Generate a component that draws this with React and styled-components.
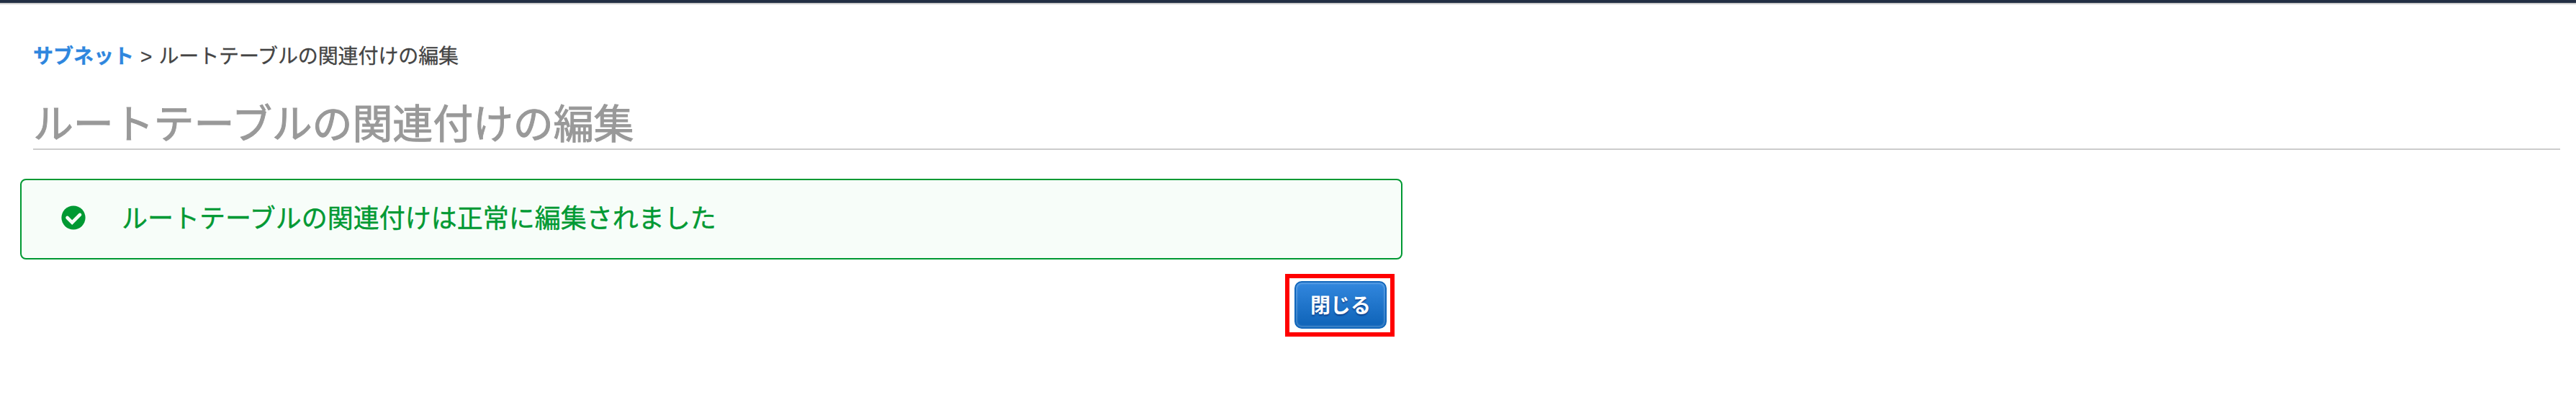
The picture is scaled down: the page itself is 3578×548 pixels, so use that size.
import React from "react";
import styled, { createGlobalStyle } from "styled-components";

const GlobalStyle = createGlobalStyle`
  body {
    margin: 0;
    background: #fff;
    font-family: "Liberation Sans", "Noto Sans CJK JP", sans-serif;
    font-size: 28px;
    color: #444;
  }
`;

const Page = styled.div`
  box-sizing: border-box;
  height: 548px;
  overflow: hidden;
`;

const TopBar = styled.header`
  height: 4px;
  background: #232f43;
  border-bottom: 2px solid #ccc;
`;

const Main = styled.main`
  display: flex;
  flex-direction: column;
  padding: 53px 22px 0 28px;
`;

const Breadcrumb = styled.nav`
  display: flex;
  gap: 9px;
  height: 40px;
  margin-left: 18px;
  line-height: 40px;
  white-space: pre;
  -webkit-text-stroke: 0.3px currentColor;
`;

const CrumbLink = styled.a`
  color: #2e86de;
  font-weight: 700;
  text-decoration: none;
`;

const CurrentCrumb = styled.span`
  letter-spacing: -0.12px;
`;

const Title = styled.h1`
  box-sizing: border-box;
  height: 109px;
  margin: 0 0 40px 18px;
  padding-top: 38px;
  border-bottom: 2px solid #ccc;
  color: #999;
  font-size: 56px;
  font-weight: 400;
  line-height: 72px;
  letter-spacing: -0.15px;
  -webkit-text-stroke: 1px currentColor;
`;

const Panel = styled.section`
  display: flex;
  flex-direction: column;
  width: 1920px;
`;

const Alert = styled.div`
  box-sizing: border-box;
  display: flex;
  align-items: center;
  gap: 50px;
  height: 112px;
  padding: 0 55px 4px;
  border: 2px solid #093;
  border-radius: 8px;
  background: #f7fdf9;
  color: #093;
  font-size: 36px;
`;

const Message = styled.span`
  padding-bottom: 4px;
  -webkit-text-stroke: 0.4px currentColor;
`;

const CheckIcon = styled.svg`
  display: block;
  width: 34px;
  height: 34px;
  flex: none;
`;

const Actions = styled.div`
  display: flex;
  justify-content: flex-end;
  margin: 20px 11px 0 0;
`;

const Highlight = styled.div`
  padding: 4px 5px 5px 7px;
  border: 6px solid #f00;
`;

const Button = styled.button`
  display: block;
  box-sizing: border-box;
  width: 128px;
  height: 66px;
  padding: 0 0 2px;
  border: 2px solid #1166bb;
  border-radius: 10px;
  background: linear-gradient(#3287de, #1166bb 90%);
  box-shadow: inset 0 0 2px 2px rgba(255, 255, 255, 0.2);
  color: #fff;
  font: 700 28px "Liberation Sans", "Noto Sans CJK JP", sans-serif;
  text-shadow: 0 2px 2px rgba(0, 0, 60, 0.4);
`;

export default function App() {
  return (
    <Page>
      <GlobalStyle />
      <TopBar />
      <Main>
        <Breadcrumb>
          <CrumbLink>サブネット</CrumbLink>
          <span>&gt;</span>
          <CurrentCrumb>ルートテーブルの関連付けの編集</CurrentCrumb>
        </Breadcrumb>
        <Title>ルートテーブルの関連付けの編集</Title>
        <Panel>
          <Alert>
            <CheckIcon viewBox="0 0 34 34">
              <circle cx="17" cy="17" r="16.6" fill="#093" />
              <path
                d="M8.5 17 L15.2 23.7 L26 12.9"
                fill="none"
                stroke="#f7fdf9"
                strokeWidth="4.6"
                strokeLinecap="round"
              />
            </CheckIcon>
            <Message>ルートテーブルの関連付けは正常に編集されました</Message>
          </Alert>
          <Actions>
            <Highlight>
              <Button>閉じる</Button>
            </Highlight>
          </Actions>
        </Panel>
      </Main>
    </Page>
  );
}
